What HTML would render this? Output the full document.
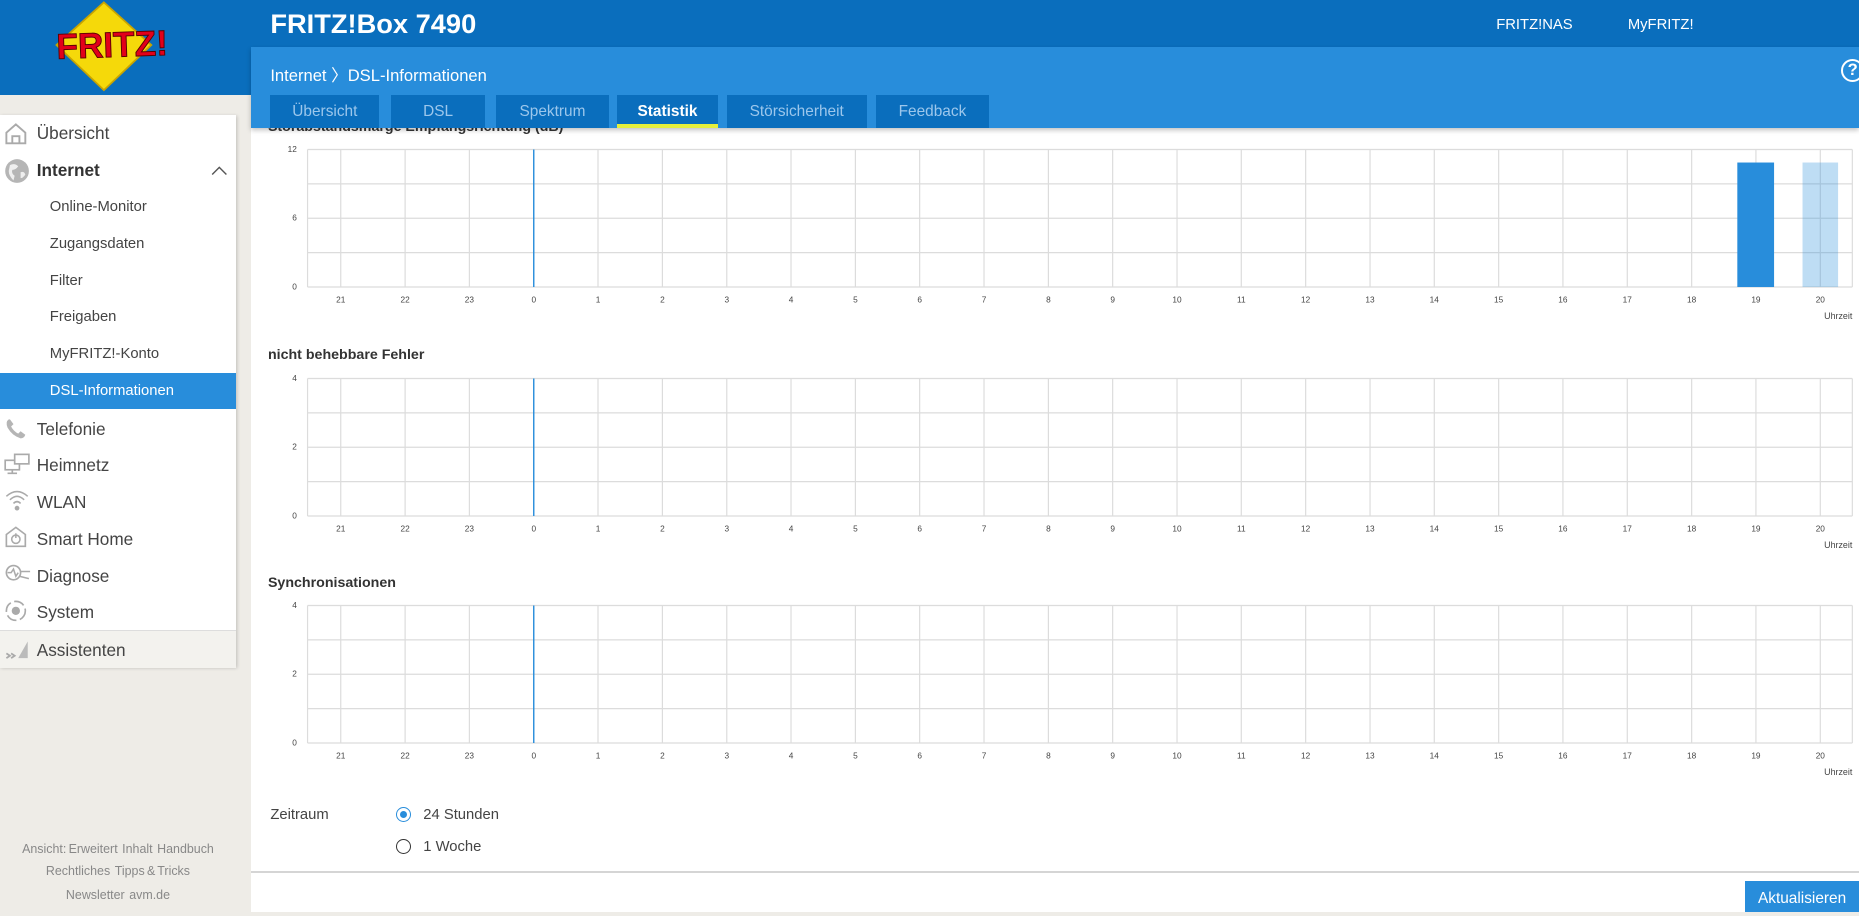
<!DOCTYPE html>
<html><head><meta charset="utf-8">
<style>
html,body{margin:0;padding:0;}
body{zoom:1.18559;width:1568px;height:769px;overflow:hidden;position:relative;background:#eeece7;font-family:"Liberation Sans",sans-serif;}
.abs{position:absolute;}
#top{left:0;top:0;width:1568px;height:40px;background:#0a6ebd;}
#logoBg{left:0;top:0;width:212px;height:80px;background:#0a6ebd;}
#hdr{left:212px;top:40px;width:1356px;height:68px;background:#288ddb;box-shadow:0 2px 4px rgba(0,0,0,.25);z-index:5;}
.tab{position:absolute;top:40px;height:28px;background:#0a6ebd;color:#9cc7ec;font-size:13px;text-align:center;line-height:28px;}
.tab.act{color:#fff;font-weight:bold;}
.tab.act:after{content:"";position:absolute;left:0;right:0;bottom:0;height:3px;background:#e5ef3c;}
#menu{left:0;top:97px;width:199px;height:466px;background:#fff;box-shadow:1px 1px 3px rgba(0,0,0,.2);}
.mi{position:absolute;left:31px;font-size:14.5px;color:#444;}
.si{position:absolute;left:42px;font-size:12.5px;color:#444;}
.ic{position:absolute;left:3px;}
#main{left:212px;top:108px;width:1356px;height:661px;background:#fff;}
.ct{position:absolute;font-size:12px;font-weight:bold;color:#333;}
svg text{font-family:"Liberation Sans",sans-serif;}
.foot{position:absolute;left:0;width:199px;text-align:center;font-size:10.5px;color:#888;word-spacing:-1px;}
</style></head><body>
<div class="abs" id="top"></div>
<div class="abs" id="logoBg"></div>
<svg class="abs" style="left:40px;top:0" width="110" height="80" viewBox="0 0 110 80">
<polygon points="48,2 88,38 48,76 8,38" fill="#f5d90a" stroke="#c8a400" stroke-width="1.5"/>
<text x="55" y="48" text-anchor="middle" font-size="30" font-weight="bold" fill="#e2001a" stroke="#5a0000" stroke-width="0.8" font-family="Liberation Sans" textLength="94" lengthAdjust="spacingAndGlyphs" transform="rotate(-2 55 40)">FRITZ!</text>
</svg>
<div class="abs" style="left:228px;top:7px;color:#fff;font-size:23px;font-weight:bold;">FRITZ!Box 7490</div>
<div class="abs" style="left:1262px;top:14px;color:#fff;font-size:12.5px;">FRITZ!NAS</div>
<div class="abs" style="left:1373px;top:14px;color:#fff;font-size:12.5px;">MyFRITZ!</div>

<div class="abs" id="main">
 <div class="ct" style="left:14px;top:-8px;">Störabstandsmarge Empfangsrichtung (dB)</div>
</div>

<div class="abs" id="hdr">
 <div class="abs" style="left:16px;top:12px;color:#fff;font-size:14px;">Internet 〉DSL-Informationen</div>
 <div class="abs" style="left:1341px;top:10px;width:16px;height:16px;border:2px solid #fff;border-radius:50%;color:#fff;font-weight:bold;font-size:14px;line-height:16px;text-align:center;">?</div>
 <div class="tab" style="left:16px;width:92px;">Übersicht</div>
 <div class="tab" style="left:118px;width:79px;">DSL</div>
 <div class="tab" style="left:206px;width:96px;">Spektrum</div>
 <div class="tab act" style="left:308px;width:86px;">Statistik</div>
 <div class="tab" style="left:401px;width:118px;">Störsicherheit</div>
 <div class="tab" style="left:527px;width:95px;">Feedback</div>
</div>

<div class="abs" id="menu">
 <div style="position:absolute;left:0;top:218px;width:199px;height:30px;background:#288ddb;"></div>
 <div style="position:absolute;left:0;top:434px;width:199px;height:32px;background:#f3f2ee;border-top:1px solid #ddd;"></div>
 <svg class="ic" style="top:6px" width="20" height="20" viewBox="0 0 20 20"><path d="M2 9 L10 2 L18 9 V18 H2 Z M7 18 V12 H13 V18" fill="none" stroke="#aaa" stroke-width="1.6"/></svg>
 <div class="mi" style="top:7px;">Übersicht</div>
 <svg class="ic" style="top:36px" width="22" height="22" viewBox="0 0 22 22"><circle cx="11" cy="11" r="10" fill="#b5b5b5"/><path d="M5 6 Q9 4 12 7 Q10 10 7 10 Q6 13 9 15 L8 19 Q4 15 4 11 Z M14 12 Q17 11 18 14 Q16 17 14 17 Z" fill="#eee"/></svg>
 <div class="mi" style="top:38px;font-weight:bold;color:#333;">Internet</div>
 <svg style="position:absolute;left:178px;top:42px" width="14" height="10" viewBox="0 0 14 10"><path d="M1 8 L7 2 L13 8" fill="none" stroke="#555" stroke-width="1.2"/></svg>
 <div class="si" style="top:71px;">Online-Monitor</div>
 <div class="si" style="top:102px;">Zugangsdaten</div>
 <div class="si" style="top:133px;">Filter</div>
 <div class="si" style="top:164px;">Freigaben</div>
 <div class="si" style="top:195px;">MyFRITZ!-Konto</div>
 <div class="si" style="top:226px;color:#fff;">DSL-Informationen</div>
 <svg class="ic" style="top:255px" width="20" height="20" viewBox="0 0 20 20"><path d="M4 2 Q1 4 3 9 Q7 16 14 18 Q17 18 18 15 L14 12 L12 14 Q8 12 6 8 L8 6 L5 2 Z" fill="#b5b5b5"/></svg>
 <div class="mi" style="top:256px;">Telefonie</div>
 <svg class="ic" style="top:284px" width="24" height="20" viewBox="0 0 24 20"><rect x="1" y="7" width="12" height="8" fill="none" stroke="#aaa" stroke-width="1.4"/><rect x="9" y="2" width="12" height="8" fill="#fff" stroke="#aaa" stroke-width="1.4"/><path d="M7 15 V18 M3 18 H11" stroke="#aaa" stroke-width="1.4"/></svg>
 <div class="mi" style="top:287px;">Heimnetz</div>
 <svg class="ic" style="top:315px" width="22" height="20" viewBox="0 0 22 20"><path d="M2 7 Q11 -1 20 7 M5 10 Q11 4 17 10 M8 13 Q11 10 14 13" fill="none" stroke="#aaa" stroke-width="1.3"/><circle cx="11" cy="17" r="2" fill="#aaa"/></svg>
 <div class="mi" style="top:318px;">WLAN</div>
 <svg class="ic" style="top:346px" width="20" height="20" viewBox="0 0 20 20"><path d="M2 8 L10 2 L18 8 V18 H2 Z" fill="none" stroke="#aaa" stroke-width="1.4"/><circle cx="10" cy="12" r="3.5" fill="none" stroke="#aaa" stroke-width="1.3"/><path d="M10 7 V11" stroke="#aaa" stroke-width="1.3"/></svg>
 <div class="mi" style="top:349px;">Smart Home</div>
 <svg class="ic" style="top:377px" width="24" height="20" viewBox="0 0 24 20"><circle cx="8" cy="9" r="6" fill="none" stroke="#aaa" stroke-width="1.4"/><path d="M3 9 H6 L8 6 L10 12 L12 9 M13 12 L21 14 M14 8 H22" fill="none" stroke="#aaa" stroke-width="1.3"/></svg>
 <div class="mi" style="top:380px;">Diagnose</div>
 <svg class="ic" style="top:408px" width="20" height="20" viewBox="0 0 20 20"><circle cx="10" cy="10" r="8" fill="none" stroke="#aaa" stroke-width="1.4" stroke-dasharray="9 3"/><circle cx="10" cy="10" r="3.5" fill="#aaa"/></svg>
 <div class="mi" style="top:411px;">System</div>
 <svg class="ic" style="top:441px" width="22" height="20" viewBox="0 0 22 20"><path d="M2 13 L5 15 L2 17 M6 13 L9 15 L6 17" fill="none" stroke="#aaa" stroke-width="1.5"/><path d="M12 17 L20 3 V17 Z" fill="#bbb"/></svg>
 <div class="mi" style="top:443px;">Assistenten</div>
</div>

<div class="foot" style="top:710px;">Ansicht: Erweitert &nbsp;Inhalt &nbsp;Handbuch</div>
<div class="foot" style="top:729px;">Rechtliches &nbsp;Tipps &amp; Tricks</div>
<div class="foot" style="top:749px;">Newsletter &nbsp;avm.de</div>

<!-- chart 1 -->
<svg class="abs" style="left:240px;top:118px" width="1328" height="160" viewBox="0 0 1328 160">
<g stroke="#dcdcdc" stroke-width="1">
<line x1="19" y1="8" x2="1322" y2="8"/><line x1="19" y1="37" x2="1322" y2="37"/><line x1="19" y1="66" x2="1322" y2="66"/><line x1="19" y1="95" x2="1322" y2="95"/><line x1="19" y1="124" x2="1322" y2="124"/>
<line x1="19" y1="8" x2="19" y2="124"/><line x1="1322" y1="8" x2="1322" y2="124"/>
<line x1="47" y1="8" x2="47" y2="124"/><line x1="101.3" y1="8" x2="101.3" y2="124"/><line x1="155.5" y1="8" x2="155.5" y2="124"/><line x1="264" y1="8" x2="264" y2="124"/><line x1="318.3" y1="8" x2="318.3" y2="124"/><line x1="372.6" y1="8" x2="372.6" y2="124"/><line x1="426.8" y1="8" x2="426.8" y2="124"/><line x1="481.1" y1="8" x2="481.1" y2="124"/><line x1="535.3" y1="8" x2="535.3" y2="124"/><line x1="589.6" y1="8" x2="589.6" y2="124"/><line x1="643.9" y1="8" x2="643.9" y2="124"/><line x1="698.1" y1="8" x2="698.1" y2="124"/><line x1="752.4" y1="8" x2="752.4" y2="124"/><line x1="806.6" y1="8" x2="806.6" y2="124"/><line x1="860.9" y1="8" x2="860.9" y2="124"/><line x1="915.2" y1="8" x2="915.2" y2="124"/><line x1="969.4" y1="8" x2="969.4" y2="124"/><line x1="1023.7" y1="8" x2="1023.7" y2="124"/><line x1="1077.9" y1="8" x2="1077.9" y2="124"/><line x1="1132.2" y1="8" x2="1132.2" y2="124"/><line x1="1186.5" y1="8" x2="1186.5" y2="124"/><line x1="1240.7" y1="8" x2="1240.7" y2="124"/><line x1="1295" y1="8" x2="1295" y2="124"/>
</g>
<line x1="209.8" y1="8" x2="209.8" y2="124" stroke="#288ddb" stroke-width="1.2"/>
<rect x="1225" y="19" width="31" height="105" fill="#288ddb"/>
<rect x="1280" y="19" width="30" height="105" fill="#288ddb" fill-opacity="0.3"/>
<g font-size="7" fill="#444" text-anchor="end"><text x="10" y="10">12</text><text x="10" y="68">6</text><text x="10" y="126">0</text></g>
<g font-size="7" fill="#444" text-anchor="middle">
<text x="47" y="137">21</text><text x="101.3" y="137">22</text><text x="155.5" y="137">23</text><text x="209.8" y="137">0</text><text x="264" y="137">1</text><text x="318.3" y="137">2</text><text x="372.6" y="137">3</text><text x="426.8" y="137">4</text><text x="481.1" y="137">5</text><text x="535.3" y="137">6</text><text x="589.6" y="137">7</text><text x="643.9" y="137">8</text><text x="698.1" y="137">9</text><text x="752.4" y="137">10</text><text x="806.6" y="137">11</text><text x="860.9" y="137">12</text><text x="915.2" y="137">13</text><text x="969.4" y="137">14</text><text x="1023.7" y="137">15</text><text x="1077.9" y="137">16</text><text x="1132.2" y="137">17</text><text x="1186.5" y="137">18</text><text x="1240.7" y="137">19</text><text x="1295" y="137">20</text>
</g>
<text x="1322" y="151" font-size="7.5" fill="#444" text-anchor="end">Uhrzeit</text>
</svg>

<div class="ct" style="left:226px;top:293px;">nicht behebbare Fehler</div>
<svg class="abs" style="left:240px;top:311px" width="1328" height="160" viewBox="0 0 1328 160">
<g stroke="#dcdcdc" stroke-width="1">
<line x1="19" y1="8" x2="1322" y2="8"/><line x1="19" y1="37" x2="1322" y2="37"/><line x1="19" y1="66" x2="1322" y2="66"/><line x1="19" y1="95" x2="1322" y2="95"/><line x1="19" y1="124" x2="1322" y2="124"/>
<line x1="19" y1="8" x2="19" y2="124"/><line x1="1322" y1="8" x2="1322" y2="124"/>
<line x1="47" y1="8" x2="47" y2="124"/><line x1="101.3" y1="8" x2="101.3" y2="124"/><line x1="155.5" y1="8" x2="155.5" y2="124"/><line x1="264" y1="8" x2="264" y2="124"/><line x1="318.3" y1="8" x2="318.3" y2="124"/><line x1="372.6" y1="8" x2="372.6" y2="124"/><line x1="426.8" y1="8" x2="426.8" y2="124"/><line x1="481.1" y1="8" x2="481.1" y2="124"/><line x1="535.3" y1="8" x2="535.3" y2="124"/><line x1="589.6" y1="8" x2="589.6" y2="124"/><line x1="643.9" y1="8" x2="643.9" y2="124"/><line x1="698.1" y1="8" x2="698.1" y2="124"/><line x1="752.4" y1="8" x2="752.4" y2="124"/><line x1="806.6" y1="8" x2="806.6" y2="124"/><line x1="860.9" y1="8" x2="860.9" y2="124"/><line x1="915.2" y1="8" x2="915.2" y2="124"/><line x1="969.4" y1="8" x2="969.4" y2="124"/><line x1="1023.7" y1="8" x2="1023.7" y2="124"/><line x1="1077.9" y1="8" x2="1077.9" y2="124"/><line x1="1132.2" y1="8" x2="1132.2" y2="124"/><line x1="1186.5" y1="8" x2="1186.5" y2="124"/><line x1="1240.7" y1="8" x2="1240.7" y2="124"/><line x1="1295" y1="8" x2="1295" y2="124"/>
</g>
<line x1="209.8" y1="8" x2="209.8" y2="124" stroke="#288ddb" stroke-width="1.2"/>
<g font-size="7" fill="#444" text-anchor="end"><text x="10" y="10">4</text><text x="10" y="68">2</text><text x="10" y="126">0</text></g>
<g font-size="7" fill="#444" text-anchor="middle">
<text x="47" y="137">21</text><text x="101.3" y="137">22</text><text x="155.5" y="137">23</text><text x="209.8" y="137">0</text><text x="264" y="137">1</text><text x="318.3" y="137">2</text><text x="372.6" y="137">3</text><text x="426.8" y="137">4</text><text x="481.1" y="137">5</text><text x="535.3" y="137">6</text><text x="589.6" y="137">7</text><text x="643.9" y="137">8</text><text x="698.1" y="137">9</text><text x="752.4" y="137">10</text><text x="806.6" y="137">11</text><text x="860.9" y="137">12</text><text x="915.2" y="137">13</text><text x="969.4" y="137">14</text><text x="1023.7" y="137">15</text><text x="1077.9" y="137">16</text><text x="1132.2" y="137">17</text><text x="1186.5" y="137">18</text><text x="1240.7" y="137">19</text><text x="1295" y="137">20</text>
</g>
<text x="1322" y="151" font-size="7.5" fill="#444" text-anchor="end">Uhrzeit</text>
</svg>

<div class="ct" style="left:226px;top:485px;">Synchronisationen</div>
<svg class="abs" style="left:240px;top:503px" width="1328" height="160" viewBox="0 0 1328 160">
<g stroke="#dcdcdc" stroke-width="1">
<line x1="19" y1="8" x2="1322" y2="8"/><line x1="19" y1="37" x2="1322" y2="37"/><line x1="19" y1="66" x2="1322" y2="66"/><line x1="19" y1="95" x2="1322" y2="95"/><line x1="19" y1="124" x2="1322" y2="124"/>
<line x1="19" y1="8" x2="19" y2="124"/><line x1="1322" y1="8" x2="1322" y2="124"/>
<line x1="47" y1="8" x2="47" y2="124"/><line x1="101.3" y1="8" x2="101.3" y2="124"/><line x1="155.5" y1="8" x2="155.5" y2="124"/><line x1="264" y1="8" x2="264" y2="124"/><line x1="318.3" y1="8" x2="318.3" y2="124"/><line x1="372.6" y1="8" x2="372.6" y2="124"/><line x1="426.8" y1="8" x2="426.8" y2="124"/><line x1="481.1" y1="8" x2="481.1" y2="124"/><line x1="535.3" y1="8" x2="535.3" y2="124"/><line x1="589.6" y1="8" x2="589.6" y2="124"/><line x1="643.9" y1="8" x2="643.9" y2="124"/><line x1="698.1" y1="8" x2="698.1" y2="124"/><line x1="752.4" y1="8" x2="752.4" y2="124"/><line x1="806.6" y1="8" x2="806.6" y2="124"/><line x1="860.9" y1="8" x2="860.9" y2="124"/><line x1="915.2" y1="8" x2="915.2" y2="124"/><line x1="969.4" y1="8" x2="969.4" y2="124"/><line x1="1023.7" y1="8" x2="1023.7" y2="124"/><line x1="1077.9" y1="8" x2="1077.9" y2="124"/><line x1="1132.2" y1="8" x2="1132.2" y2="124"/><line x1="1186.5" y1="8" x2="1186.5" y2="124"/><line x1="1240.7" y1="8" x2="1240.7" y2="124"/><line x1="1295" y1="8" x2="1295" y2="124"/>
</g>
<line x1="209.8" y1="8" x2="209.8" y2="124" stroke="#288ddb" stroke-width="1.2"/>
<g font-size="7" fill="#444" text-anchor="end"><text x="10" y="10">4</text><text x="10" y="68">2</text><text x="10" y="126">0</text></g>
<g font-size="7" fill="#444" text-anchor="middle">
<text x="47" y="137">21</text><text x="101.3" y="137">22</text><text x="155.5" y="137">23</text><text x="209.8" y="137">0</text><text x="264" y="137">1</text><text x="318.3" y="137">2</text><text x="372.6" y="137">3</text><text x="426.8" y="137">4</text><text x="481.1" y="137">5</text><text x="535.3" y="137">6</text><text x="589.6" y="137">7</text><text x="643.9" y="137">8</text><text x="698.1" y="137">9</text><text x="752.4" y="137">10</text><text x="806.6" y="137">11</text><text x="860.9" y="137">12</text><text x="915.2" y="137">13</text><text x="969.4" y="137">14</text><text x="1023.7" y="137">15</text><text x="1077.9" y="137">16</text><text x="1132.2" y="137">17</text><text x="1186.5" y="137">18</text><text x="1240.7" y="137">19</text><text x="1295" y="137">20</text>
</g>
<text x="1322" y="151" font-size="7.5" fill="#444" text-anchor="end">Uhrzeit</text>
</svg>

<div class="abs" style="left:228px;top:681px;font-size:12.5px;color:#444;">Zeitraum</div>
<div class="abs" style="left:334px;top:681px;width:11px;height:11px;border:1.5px solid #288ddb;border-radius:50%;"><div style="margin:2.5px;width:6px;height:6px;border-radius:50%;background:#288ddb;"></div></div>
<div class="abs" style="left:357px;top:681px;font-size:12.5px;color:#444;">24 Stunden</div>
<div class="abs" style="left:334px;top:708px;width:11px;height:11px;border:1.5px solid #333;border-radius:50%;"></div>
<div class="abs" style="left:357px;top:708px;font-size:12.5px;color:#444;">1 Woche</div>
<div class="abs" style="left:212px;top:735px;width:1356px;height:1px;background:#d5d5d5;"></div>
<div class="abs" style="left:1472px;top:743px;width:96px;height:26px;background:#288ddb;color:#fff;font-size:13px;line-height:30px;text-align:center;">Aktualisieren</div>
</body></html>
